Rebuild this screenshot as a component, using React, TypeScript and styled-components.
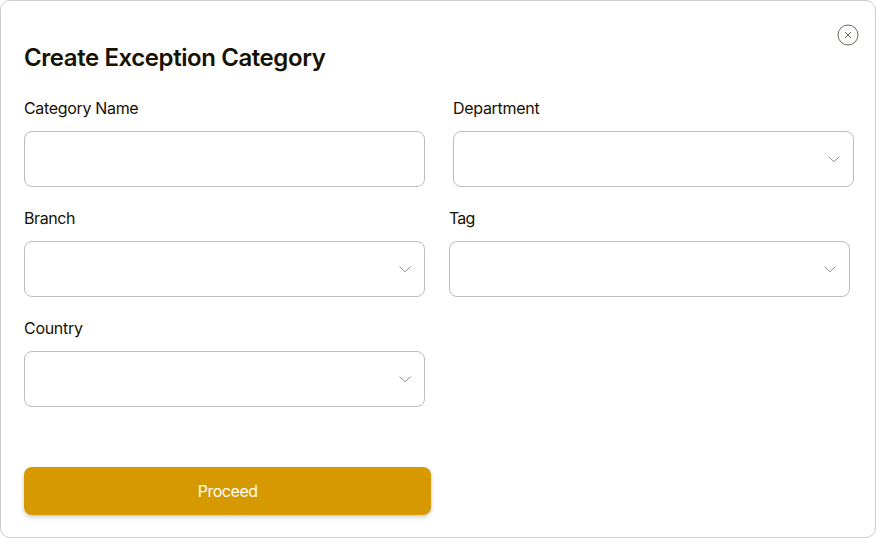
import React from "react";
import styled, { createGlobalStyle } from "styled-components";

const GlobalStyle = createGlobalStyle`
  *, *::before, *::after { box-sizing: border-box; }
  body { margin: 0; background: #fff; }
`;

const Dialog = styled.main`
  display: flex;
  flex-direction: column;
  width: 876px;
  height: 538px;
  padding: 23px 16px 22px 23px;
  border: 1px solid #cccccc;
  border-radius: 10px;
  background: #fff;
  color: #171100;
  font-family: Inter, "Liberation Sans", sans-serif;
`;

const Header = styled.header`
  display: flex;
  flex: none;
  justify-content: space-between;
  align-items: flex-start;
  height: 73px;
`;

const Title = styled.h1`
  margin: 18px 0 0;
  font-size: 24px;
  line-height: 32px;
  font-weight: 600;
  letter-spacing: -0.42px;
  white-space: nowrap;
`;

const CloseButton = styled.button`
  display: flex;
  width: 22px;
  height: 22px;
  padding: 0;
  border: 0;
  background: none;
`;

const Form = styled.form`
  display: flex;
  flex-direction: column;
`;

const Row = styled.div<{ $gap: number }>`
  display: flex;
  gap: ${({ $gap }) => $gap}px;
  height: 110px;
`;

const Field = styled.label`
  display: flex;
  flex-direction: column;
  gap: 12px;
  width: 401px;
`;

const LabelText = styled.span<{ $tracking: number }>`
  height: 22px;
  font-size: 16px;
  line-height: 22px;
  letter-spacing: ${({ $tracking }) => $tracking}px;
`;

const Control = styled.span`
  display: flex;
  align-items: center;
  justify-content: flex-end;
  height: 56px;
  padding-right: 13px;
  border: 1px solid #bdbdbd;
  border-radius: 8px;
`;

const Proceed = styled.button`
  flex: none;
  width: 406.5px;
  height: 48px;
  margin: 40px 0 0 0.4px;
  padding: 0;
  border: 0;
  border-radius: 8px;
  background: #d79900;
  box-shadow: 0 2px 4px rgba(0, 0, 0, 0.22);
  color: #fff;
  font-family: inherit;
  font-size: 16px;
  line-height: 22px;
  letter-spacing: -0.45px;
`;

const Chevron = () => (
  <svg width="12" height="8" viewBox="0 0 12 8" fill="none">
    <path d="M.5 1.7 6 6.7l5.5-5" stroke="#74716b" strokeWidth=".8" />
  </svg>
);

const CloseIcon = () => (
  <svg width="22" height="22" viewBox="0 0 22 22" fill="none" stroke="#5c574d">
    <circle cx="11" cy="11" r="10" strokeWidth=".9" />
    <path d="m8 8 6 6m0-6-6 6" strokeWidth=".9" />
  </svg>
);

type FieldSpec = { label: string; tracking: number; select: boolean };

const rows: { gap: number; fields: FieldSpec[] }[] = [
  {
    gap: 28,
    fields: [
      { label: "Category Name", tracking: -0.33, select: false },
      { label: "Department", tracking: -0.3, select: true },
    ],
  },
  {
    gap: 24,
    fields: [
      { label: "Branch", tracking: -0.4, select: true },
      { label: "Tag", tracking: -0.8, select: true },
    ],
  },
  { gap: 24, fields: [{ label: "Country", tracking: -0.3, select: true }] },
];

export default function App() {
  return (
    <>
      <GlobalStyle />
      <Dialog>
        <Header>
          <Title>Create Exception Category</Title>
          <CloseButton aria-label="Close">
            <CloseIcon />
          </CloseButton>
        </Header>
        <Form>
          {rows.map((row, i) => (
            <Row key={i} $gap={row.gap}>
              {row.fields.map((field) => (
                <Field key={field.label}>
                  <LabelText $tracking={field.tracking}>{field.label}</LabelText>
                  <Control>{field.select && <Chevron />}</Control>
                </Field>
              ))}
            </Row>
          ))}
          <Proceed type="button">Proceed</Proceed>
        </Form>
      </Dialog>
    </>
  );
}
